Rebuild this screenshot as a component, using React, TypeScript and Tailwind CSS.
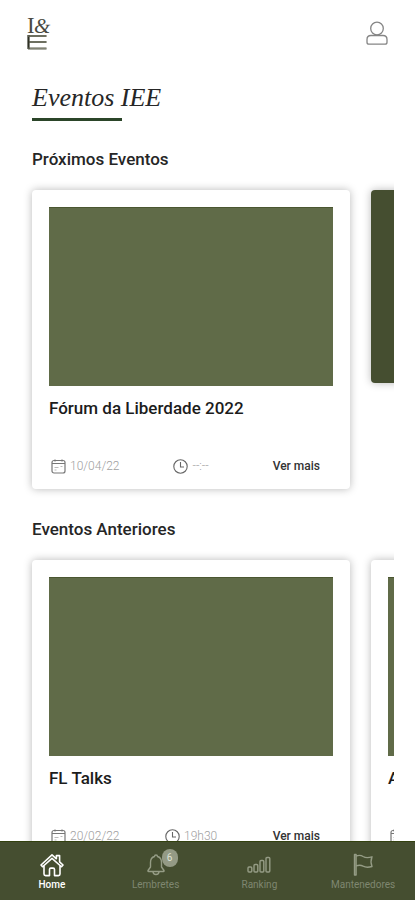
import React from 'react';

interface EventItem {
  title: string;
  date?: string;
  time?: string;
}

const PREVIOUS_EVENTS: EventItem[] = [
  { title: 'FL Talks', date: '20/02/22', time: '19h30' },
  { title: 'A' },
];

const Logo = () => (
  <svg width="24" height="34" viewBox="0 0 24 34" role="img" aria-label="I&E" className="overflow-visible">
    <text x="0" y="17" fontSize="23" fill="#4a4a42" fontFamily="Liberation Serif, serif">I</text>
    <text x="7" y="17" fontSize="21" fill="#4a4a42" fontStyle="italic" fontFamily="Liberation Serif, serif">&amp;</text>
    <path d="M1.500 19v14" stroke="#2e3024" strokeWidth="2.200" />
    <path d="M1 20h18.500M2 26h17.500M1 32.500h18.500" stroke="#5a5c4c" strokeWidth="2" />
    <path d="M3 20h16.500M3 26h16.500M3 32.500h16.500" stroke="#a9aa9c" strokeWidth=".5" />
  </svg>
);

const UserIcon = () => (
  <svg width="24" height="26" viewBox="0 0 24 26" fill="none" stroke="#858585" strokeWidth="1.3">
    <circle cx="12" cy="8.500" r="6.300" />
    <path d="M6 15.500h12c2.300 0 4 1.700 4 4v2.700c0 1.200-.8 2-2 2H4c-1.200 0-2-.8-2-2v-2.700c0-2.300 1.700-4 4-4z" />
  </svg>
);

const CalendarIcon = () => (
  <svg width="15" height="15" viewBox="0 0 15 15" fill="none" stroke="#777" strokeWidth="1.200" className="shrink-0">
    <rect x="1" y="1.500" width="13" height="12.500" rx="2" />
    <path d="M1 4.500h13M4 .5v2M11 .5v2" />
    <path d="M3.500 8.500h4M9.500 7.500h2M3.500 11h2" stroke="#bbb" />
  </svg>
);

const ClockIcon = () => (
  <svg width="15" height="15" viewBox="0 0 15 15" fill="none" stroke="#666" strokeWidth="1.100" className="shrink-0">
    <circle cx="7.500" cy="7.500" r="6.700" />
    <path d="M7.500 3v5h3.500" />
  </svg>
);

const HomeIcon = () => (
  <svg width="24" height="24" viewBox="0 0 24 24" fill="none" stroke="currentColor" strokeWidth="1.600" strokeLinejoin="round">
    <path d="M12 1.800 1 12l1.500 1.700 1.500-1.200V21c0 1 .6 1.600 1.600 1.600H9.500v-6.200c0-.8.500-1.300 1.300-1.300h2.400c.8 0 1.300.5 1.300 1.300v6.200h3.900c1 0 1.600-.6 1.600-1.600v-8.500l1.500 1.200L23 12l-3.400-3.200V2.600h-3.200v3.200z" />
    <path d="M4 12.500 12 5.400l8 7.100" />
  </svg>
);

const BellIcon = () => (
  <svg width="24" height="24" viewBox="0 0 24 24" fill="none" stroke="currentColor" strokeWidth="1.400" strokeLinejoin="round">
    <path d="M10.500 3.500c0-2 3-2 3 0 2.700.7 4 3 4 6V14l2.500 3.500c.3.500 0 1-.6 1H4.600c-.6 0-.9-.5-.6-1L6.500 14V9.500c0-3 1.300-5.300 4-6z" />
    <path d="M9 18.500c0 4 6 4 6 0" />
  </svg>
);

const RankingIcon = () => (
  <svg width="24" height="24" viewBox="0 0 24 24" fill="none" stroke="currentColor" strokeWidth="1.400">
    <rect x="1" y="14" width="3.800" height="5" rx="1" />
    <rect x="7" y="11.500" width="3.800" height="7.500" rx="1" />
    <rect x="13" y="7.500" width="3.800" height="11.500" rx="1" />
    <rect x="19" y="4.500" width="3.800" height="14.500" rx="1" />
  </svg>
);

const FlagIcon = () => (
  <svg width="24" height="24" viewBox="0 0 24 24" fill="none" stroke="currentColor" strokeWidth="1.400" strokeLinejoin="round">
    <path d="M3.500 1.500v20.500h1.600V1.500z" />
    <path d="M5.100 3c3-1 5-.8 7 .5 2.300 1.400 5 1.500 8.900.3-1.200 3-1.200 6.500 0 9.700-3.900 1.200-6.600 1-8.900-.3-2-1.200-4-1.400-7-.4" />
  </svg>
);

const NAV_ITEMS = [
  { label: 'Home', icon: <HomeIcon />, active: true },
  { label: 'Lembretes', icon: <BellIcon />, badge: 6 },
  { label: 'Ranking', icon: <RankingIcon /> },
  { label: 'Mantenedores', icon: <FlagIcon /> },
];

const EventCard: React.FC<{ event: EventItem }> = ({ event }) => (
  <article className="w-[318px] shrink-0 rounded bg-white px-[17px] pt-[17px] pb-[15px] shadow-[0_0_8px_rgba(0,0,0,0.28)]">
    <div className="h-[179px] border-t border-[#4a5630] bg-[#606b48]" />
    <h3 className="mt-[10px] text-[17px] leading-6 font-medium text-[#1c1c1c]">{event.title}</h3>
    <div className="mt-[38px] flex h-4 items-center justify-between pr-[13px] pl-[2px] text-xs text-[#a0a0a0]">
      <span className="flex items-center gap-1 font-light">
        <CalendarIcon />
        {event.date}
      </span>
      <span className="flex items-center gap-1 font-light">
        <ClockIcon />
        {event.time}
      </span>
      <button type="button" className="pl-[10px] font-medium text-[#333]">Ver mais</button>
    </div>
  </article>
);

const Carousel: React.FC<{ title: string; children: React.ReactNode }> = ({ title, children }) => (
  <section>
    <h2 className="px-3 text-[17px] leading-6 font-medium text-[#262626]">{title}</h2>
    <div className="mt-[7px] flex items-start gap-[21px] overflow-x-auto p-3 [scrollbar-width:none]">{children}</div>
  </section>
);

const App: React.FC = () => (
  <div className="flex h-screen flex-col bg-white font-['Roboto',sans-serif]">
    <main className="min-h-0 flex-1 overflow-y-auto pr-[21px] pl-5 [scrollbar-width:none]">
      <header className="flex items-center justify-between pt-4 pr-[5px] pl-[7px]">
        <Logo />
        <button type="button" aria-label="Perfil">
          <UserIcon />
        </button>
      </header>

      <div className="mt-8 px-3">
        <h1 className="font-['Liberation_Serif',serif] text-[26px] leading-8 text-[#262626] italic">Eventos IEE</h1>
        <div className="mt-1 h-[3px] w-[90px] bg-[#2b4529]" />
      </div>

      <div className="mt-[26px] flex flex-col gap-4">
        <Carousel title="Próximos Eventos">
          <EventCard event={{ title: 'Fórum da Liberdade 2022', date: '10/04/22', time: '--:--' }} />
          <div className="h-[193px] w-[318px] shrink-0 rounded bg-[#454e30] shadow-[0_0_8px_rgba(0,0,0,0.28)]" />
        </Carousel>
        <Carousel title="Eventos Anteriores">
          {PREVIOUS_EVENTS.map(event => (
            <EventCard key={event.title} event={event} />
          ))}
        </Carousel>
      </div>
    </main>

    <nav className="flex h-[59px] shrink-0 border-t border-[#33410f] bg-[#454e30]">
      {NAV_ITEMS.map(item => (
        <button
          key={item.label}
          type="button"
          className={`flex flex-1 basis-0 flex-col items-center pt-[11px] text-[10px] leading-4 ${item.active ? 'font-medium text-white' : 'text-[#7f8770]'}`}
        >
          <span className={`relative ${item.active ? '' : 'text-[#959c85]'}`}>
            {item.icon}
            {item.badge && (
              <span className="absolute -top-1 left-[18px] flex h-[18px] w-4 items-center justify-center rounded-full bg-[#949a85] text-[10px] text-[#dfe3d6]">
                {item.badge}
              </span>
            )}
          </span>
          {item.label}
        </button>
      ))}
    </nav>
  </div>
);

export default App;
